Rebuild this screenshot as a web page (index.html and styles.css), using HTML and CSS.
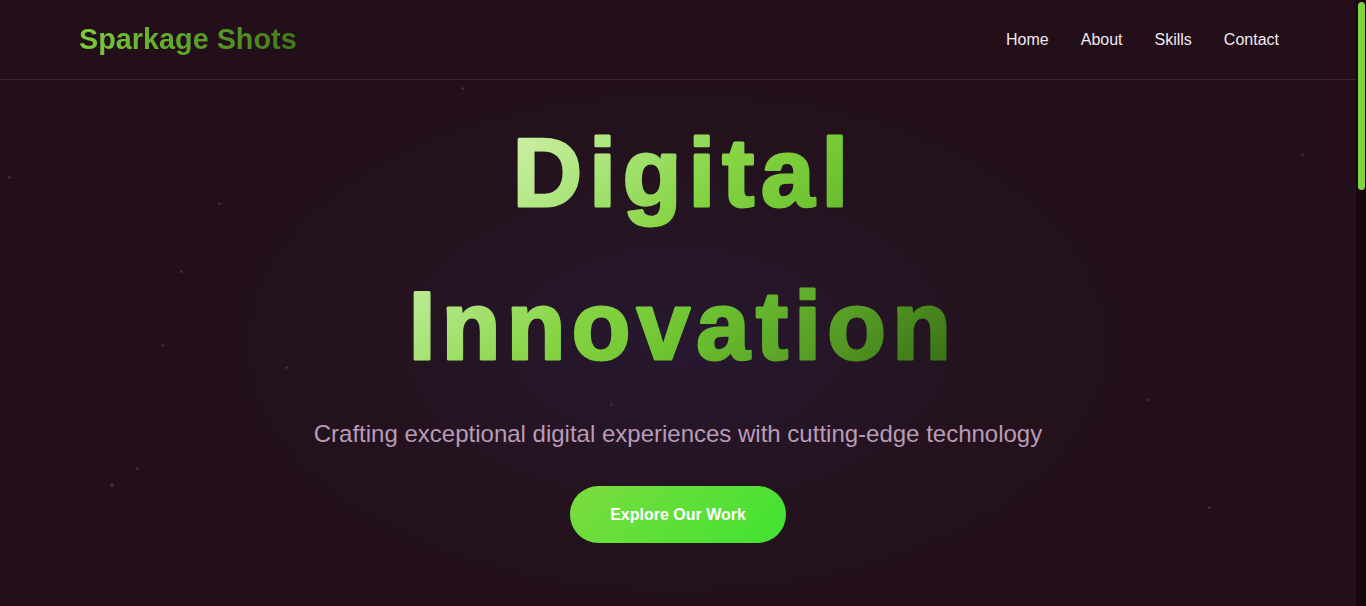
FILE: index.html
```html
<!DOCTYPE html>
<html lang="en">
<head>
<meta charset="utf-8">
<title>Sparkage Shots</title>
<link rel="stylesheet" href="styles.css">
</head>
<body>
<div class="page">
  <header class="site-header">
    <div class="container header-inner">
      <a class="logo" href="#">Sparkage Shots</a>
      <nav class="nav">
        <a href="#">Home</a>
        <a href="#">About</a>
        <a href="#">Skills</a>
        <a href="#">Contact</a>
      </nav>
    </div>
  </header>
  <section class="hero">
    <span class="dot d1"></span><span class="dot d2"></span><span class="dot d3"></span>
    <span class="dot d4"></span><span class="dot d5"></span><span class="dot d6"></span>
    <span class="dot d7"></span><span class="dot d8"></span><span class="dot d9"></span>
    <span class="dot d10"></span><span class="dot d11"></span><span class="dot d12"></span>
    <div class="hero-content">
      <h1 class="hero-title">
        <svg class="title-svg" width="560" height="304" viewBox="0 0 560 304">
          <defs>
            <linearGradient id="tg" gradientUnits="userSpaceOnUse" x1="64" y1="-64" x2="496" y2="368">
              <stop offset="0" stop-color="#e2f8cc"/>
              <stop offset="0.18" stop-color="#cdeea5"/>
              <stop offset="0.3" stop-color="#aee680"/>
              <stop offset="0.46" stop-color="#86d444"/>
              <stop offset="0.6" stop-color="#6fc432"/>
              <stop offset="0.79" stop-color="#549a24"/>
              <stop offset="0.94" stop-color="#3b7216"/>
              <stop offset="1" stop-color="#356811"/>
            </linearGradient>
          </defs>
          <text class="title-line line-1" x="286" y="110">Digital</text>
          <text class="title-line line-2" x="285" y="263">Innovation</text>
        </svg>
      </h1>
      <p class="hero-sub">Crafting exceptional digital experiences with cutting-edge technology</p>
      <a class="btn" href="#">Explore Our Work</a>
    </div>
  </section>
</div>
<div class="scrollbar"><div class="thumb"></div></div>
</body>
</html>
```
FILE: styles.css
```css
html {
  background: #220f19;
}
body {
  margin: 0;
  height: 606px;
  overflow: hidden;
  display: flex;
  font-family: "Liberation Sans", Arial, sans-serif;
  line-height: 1.6;
  color: #f2e8ef;
  background: #220f19;
}
a { text-decoration: none; }
.page {
  flex: 1;
  min-width: 0;
}
.scrollbar {
  width: 10px;
  height: 606px;
  background: #16070e;
  padding: 2px 1px 0 2px;
  box-sizing: border-box;
}
.thumb {
  height: 188px;
  border-radius: 4px;
  background: #7ed63a;
}
.container {
  max-width: 1200px;
  margin: 0 auto;
}
.site-header {
  height: 79px;
  border-bottom: 1px solid #3a2832;
  background: #220f19;
}
.header-inner {
  height: 100%;
  display: flex;
  align-items: center;
  justify-content: space-between;
}
.logo {
  font-size: 1.8rem;
  font-weight: 700;
  background: linear-gradient(90deg, #7ccc3a, #3f7a1a);
  -webkit-background-clip: text;
  background-clip: text;
  color: transparent;
  line-height: 1.2;
  margin-left: 1px;
}
.nav {
  display: flex;
  gap: 32px;
  margin-right: -1px;
}
.nav a {
  color: #f2e8ef;
  font-size: 16px;
}
.hero {
  position: relative;
  height: 526px;
  background: radial-gradient(ellipse 520px 300px at 50% 50%, #271830 0%, #24131f 55%, #220f19 100%);
  overflow: hidden;
  text-align: center;
}
.hero-content {
  position: relative;
  padding-top: 16px;
}
.hero-title {
  margin: 0;
  line-height: 0;
}
.title-svg {
  display: inline-block;
  overflow: visible;
}
.title-line {
  font-family: "Liberation Sans", Arial, sans-serif;
  font-size: 96px;
  font-weight: 700;
  text-anchor: middle;
  fill: url(#tg);
  stroke: url(#tg);
  stroke-width: 3px;
  stroke-linejoin: round;
}
.line-1 { letter-spacing: 7px; }
.line-2 { letter-spacing: 6.3px; }
.hero-sub {
  margin: 15px 0 33px;
  font-size: 1.5rem;
  color: #b99bb8;
}
.btn {
  display: inline-block;
  padding: 16px 40px;
  border-radius: 30px;
  background: linear-gradient(135deg, #7cdc3e, #40e232);
  color: #ffffff;
  font-weight: 700;
  font-size: 16px;
  line-height: 25px;
}
.dot {
  position: absolute;
  width: 3px;
  height: 3px;
  border-radius: 50%;
  background: #3a2a45;
}
.d1 { left: 461px; top: 7px; }
.d2 { left: 8px; top: 96px; }
.d3 { left: 180px; top: 190px; }
.d4 { left: 161px; top: 264px; }
.d5 { left: 218px; top: 122px; }
.d6 { left: 110px; top: 403px; width: 4px; height: 4px; }
.d7 { left: 1301px; top: 73px; }
.d8 { left: 1146px; top: 318px; }
.d9 { left: 1208px; top: 426px; }
.d10 { left: 610px; top: 323px; }
.d11 { left: 136px; top: 387px; }
.d12 { left: 285px; top: 286px; }
```
